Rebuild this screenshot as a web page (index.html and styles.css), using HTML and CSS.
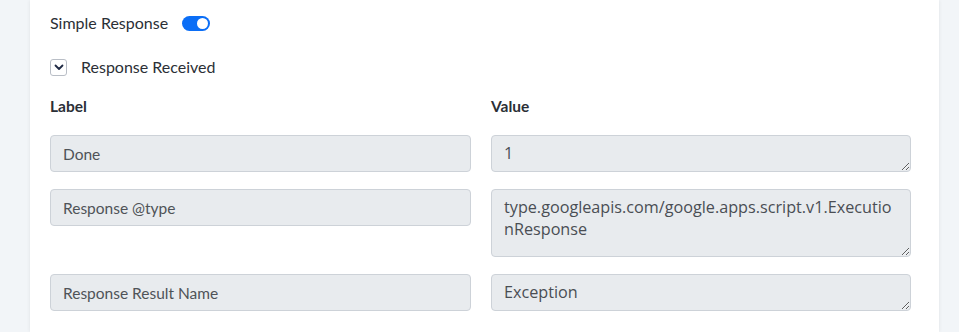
FILE: index.html
```html
<!DOCTYPE html>
<html lang="en">
<head>
  <meta charset="UTF-8">
  <title>Response Mapping</title>
  <link rel="stylesheet" href="styles.css">
</head>
<body>
  <div class="card">
    <div class="switch-row">
      <span>Simple Response</span>
      <span class="toggle on"><span class="knob"></span></span>
    </div>

    <div class="collapse-row">
      <span class="chevron-box">
        <svg width="10" height="7" viewBox="0 0 10 7"><path d="M1.5 1.5 L5 5 L8.5 1.5" fill="none" stroke="#1f2a44" stroke-width="1.8" stroke-linecap="round" stroke-linejoin="round"/></svg>
      </span>
      <span>Response Received</span>
    </div>

    <div class="grid">
      <div class="head">Label</div>
      <div class="head">Value</div>

      <input class="field" type="text" value="Done" readonly>
      <textarea class="value" readonly>1</textarea>

      <input class="field" type="text" value="Response @type" readonly>
      <textarea class="value tall" readonly>type.googleapis.com/google.apps.script.v1.ExecutionResponse</textarea>

      <input class="field" type="text" value="Response Result Name" readonly>
      <textarea class="value" readonly>Exception</textarea>
    </div>
  </div>
</body>
</html>
```

FILE: styles.css
```css
body {
  margin: 0;
  padding: 0 20px 0 30px;
  background-color: #f2f5f8;
  font-family: Lato, 'Open Sans', sans-serif;
  color: #2b2f36;
}

.card {
  background: white;
  min-height: 332px;
  padding: 11px 28px 0 20px;
  box-sizing: border-box;
  box-shadow: 0 0 4px rgba(0,0,0,0.08);
}

.switch-row {
  display: flex;
  align-items: center;
  height: 22px;
  font-size: 16px;
}

.toggle {
  width: 28px;
  height: 15px;
  border-radius: 8px;
  background-color: #0b6ef6;
  margin-left: 14px;
  position: relative;
  top: 1px;
}

.toggle .knob {
  position: absolute;
  top: 2px;
  right: 2px;
  width: 11px;
  height: 11px;
  border-radius: 50%;
  background: white;
}

.collapse-row {
  display: flex;
  align-items: center;
  height: 22px;
  margin-top: 22px;
  font-size: 16px;
}

.chevron-box {
  width: 15px;
  height: 15px;
  border: 1px solid #b9bec6;
  border-radius: 3px;
  display: flex;
  align-items: center;
  justify-content: center;
  margin-right: 14px;
  position: relative;
  top: 1px;
}

.grid {
  display: grid;
  grid-template-columns: 421px 420px;
  column-gap: 20px;
  row-gap: 17px;
  align-items: start;
  margin-top: 19px;
}

.head {
  font-weight: 700;
  font-size: 15.5px;
  line-height: 20px;
  margin-bottom: 2px;
}

.field,
.value {
  box-sizing: border-box;
  width: 100%;
  margin: 0;
  background-color: #e8ebee;
  border: 1px solid #cdd2d8;
  border-radius: 4px;
  outline: none;
}

.field {
  height: 37px;
  padding: 0 12px;
  font-family: Lato, 'Open Sans', sans-serif;
  font-size: 15.5px;
  color: #4f5358;
}

.value {
  height: 37px;
  padding: 6px 12px;
  font-family: 'Open Sans', sans-serif;
  font-size: 16.2px;
  line-height: 22px;
  color: #4a4e54;
  resize: vertical;
  overflow: hidden;
  display: block;
}

.value.tall {
  height: 68px;
}
```
